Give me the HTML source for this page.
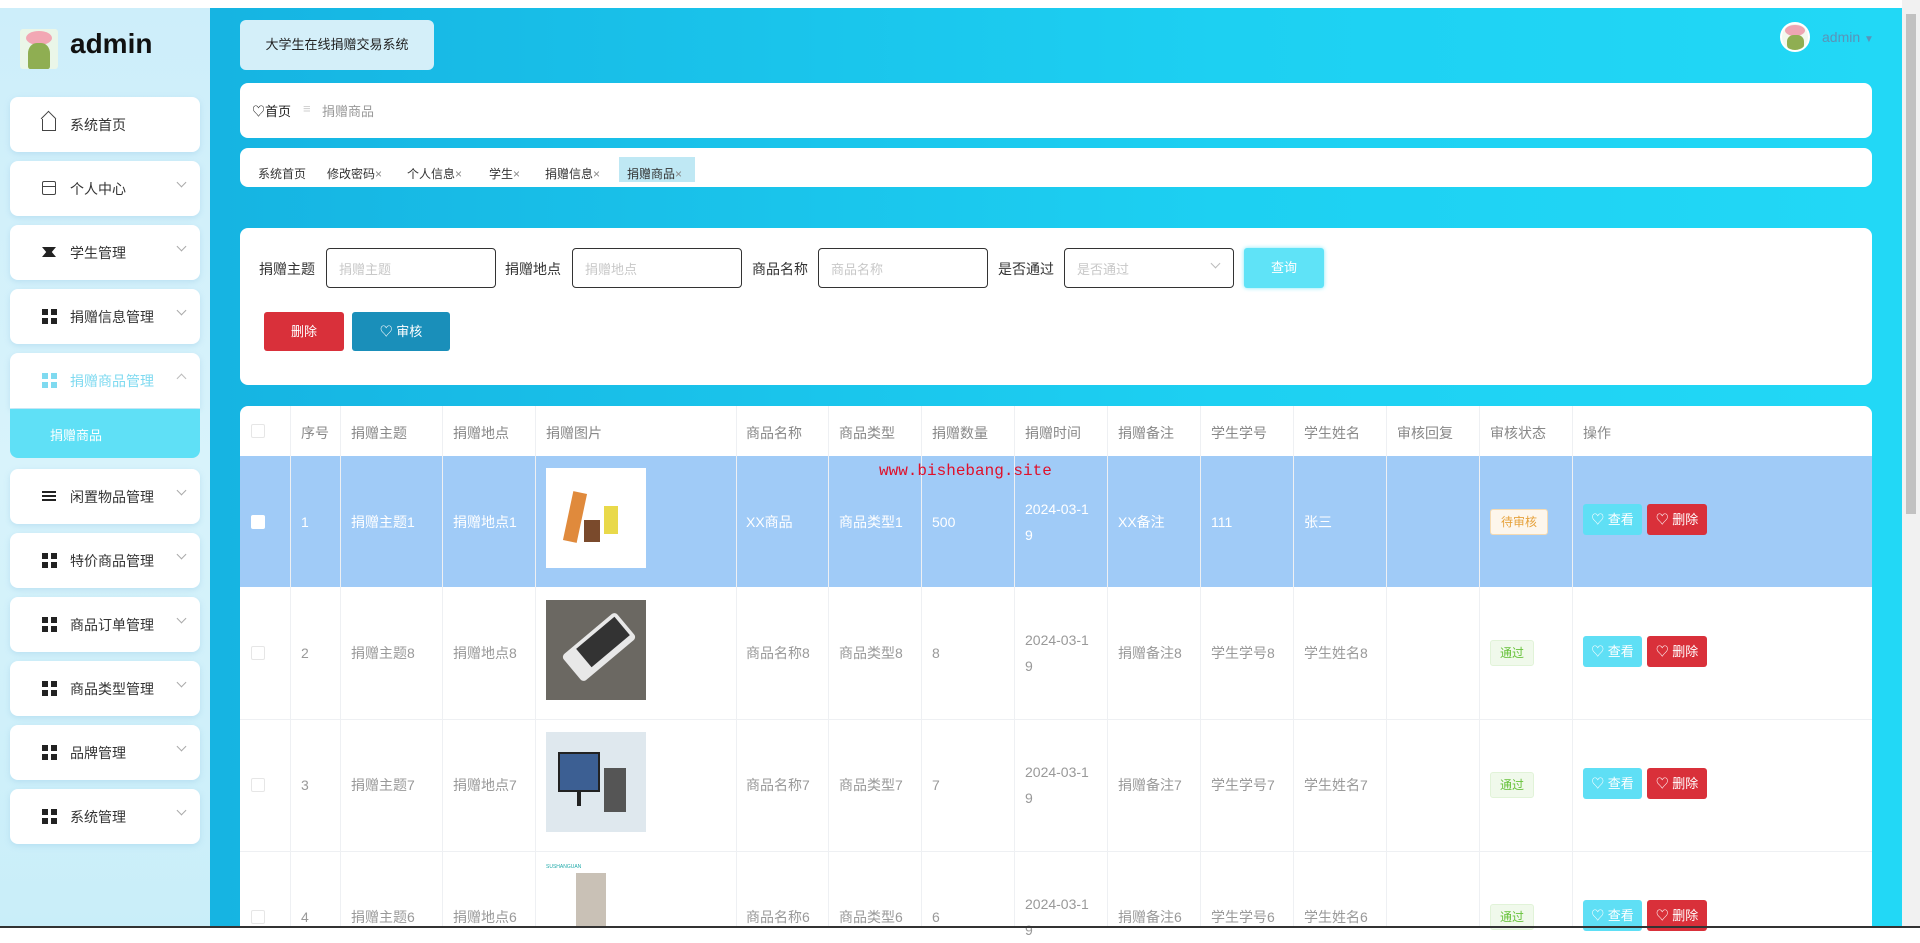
<!DOCTYPE html>
<html><head><meta charset="utf-8">
<style>
*{margin:0;padding:0;box-sizing:border-box}
body{width:1920px;height:928px;overflow:hidden;position:relative;font-family:"Liberation Sans","Noto Sans CJK SC",sans-serif;font-size:14px;color:#333;background:#fff}
.a{position:absolute}
#side{left:0;top:8px;width:210px;height:920px;background:linear-gradient(180deg,#cdeefa,#d8f3fb 50%,#c9eef9)}
#main{left:210px;top:8px;width:1692px;height:920px;background:linear-gradient(90deg,#16b4e2,#1dd0f2 60%,#22d8f6)}
#sb{left:1902px;top:0;width:18px;height:928px;background:#f1f1f1}
.mi{left:10px;width:190px;height:55px;background:#fff;border-radius:8px;box-shadow:0 2px 6px rgba(150,200,230,.4)}
.mi span{position:absolute;left:60px;top:18px;font-size:14px;color:#333}
.mi i{position:absolute;left:32px;top:20px;width:14px;height:14px}
.mi b{position:absolute;left:168px;top:18px;width:7px;height:7px;border-right:1px solid #aaa;border-bottom:1px solid #aaa;transform:rotate(45deg)}
.card{background:#fff;border-radius:8px}
.lbl{font-size:14px;color:#333}
.inp{height:40px;border:1px solid #333;border-radius:4px;background:#fff;font-size:13px;color:#c8c8c8;padding:10px 12px}
.th{top:423px;font-size:14px;color:#888}
.vl{width:1px;background:#eef0f3}
.tc{font-size:14px;color:#999;line-height:26px}
.w{color:#fff}
.btn{height:31px;border-radius:3px;color:#fff;font-size:13px;line-height:31px;text-align:center}
.grid4{display:grid;grid-template-columns:6px 6px;gap:3px}
.grid4 u{display:block;width:6px;height:6px;background:#222}
</style></head><body>
<div class="a" id="side"></div>
<div class="a" id="main"></div>
<div class="a" id="sb"><div class="a" style="left:4px;top:14px;width:10px;height:500px;background:#c1c1c1"></div></div>

<!-- logo -->
<div class="a" style="left:20px;top:29px;width:38px;height:40px;background:#eaf6e8;border-radius:3px;overflow:hidden">
<div class="a" style="left:6px;top:2px;width:26px;height:14px;background:#f2a7b4;border-radius:50%"></div>
<div class="a" style="left:8px;top:14px;width:22px;height:26px;background:#8fae52;border-radius:40% 40% 10% 10%"></div>
</div>
<div class="a" style="left:70px;top:28px;font-size:28px;font-weight:bold;color:#111">admin</div>

<!-- menu -->
<div class="a mi" style="top:97px"><i style="border:1.5px solid #444;border-top:none;top:22px;height:12px"></i><i style="border-left:1.5px solid #444;border-top:1.5px solid #444;transform:rotate(45deg);width:11px;height:11px;left:33px;top:16px"></i><span>系统首页</span></div>
<div class="a mi" style="top:161px"><i style="border:1.5px solid #444;border-radius:2px"></i><i style="border-top:1.5px solid #444;top:25px;height:1px"></i><span>个人中心</span><b></b></div>
<div class="a mi" style="top:225px"><i style="background:#222;height:10px;top:22px;clip-path:polygon(0 0,100% 0,70% 50%,100% 100%,0 100%,30% 50%)"></i><span>学生管理</span><b></b></div>
<div class="a mi" style="top:289px"><i class="grid4" style="display:grid"><u></u><u></u><u></u><u></u></i><span>捐赠信息管理</span><b></b></div>
<div class="a mi" style="top:353px;border-radius:8px 8px 0 0"><i class="grid4" style="display:grid"><u style="background:#7fdaf0"></u><u style="background:#7fdaf0"></u><u style="background:#7fdaf0"></u><u style="background:#7fdaf0"></u></i><span style="color:#7fdaf0">捐赠商品管理</span><b style="transform:rotate(-135deg);top:22px;border-color:#bbb"></b></div>
<div class="a" style="left:10px;top:409px;width:190px;height:49px;background:#5fe0f6;border-radius:0 0 8px 8px"><span class="a" style="left:40px;top:16px;font-size:13px;color:#fff">捐赠商品</span></div>
<div class="a mi" style="top:469px"><i style="border-top:2px solid #222;border-bottom:2px solid #222;height:10px;top:22px"></i><i style="border-top:2px solid #222;height:1px;top:26px"></i><span>闲置物品管理</span><b></b></div>
<div class="a mi" style="top:533px"><i class="grid4" style="display:grid"><u></u><u></u><u></u><u></u></i><span>特价商品管理</span><b></b></div>
<div class="a mi" style="top:597px"><i class="grid4" style="display:grid"><u></u><u></u><u></u><u></u></i><span>商品订单管理</span><b></b></div>
<div class="a mi" style="top:661px"><i class="grid4" style="display:grid"><u></u><u></u><u></u><u></u></i><span>商品类型管理</span><b></b></div>
<div class="a mi" style="top:725px"><i class="grid4" style="display:grid"><u></u><u></u><u></u><u></u></i><span>品牌管理</span><b></b></div>
<div class="a mi" style="top:789px"><i class="grid4" style="display:grid"><u></u><u></u><u></u><u></u></i><span>系统管理</span><b></b></div>

<!-- header -->
<div class="a" style="left:240px;top:20px;width:194px;height:50px;background:#d4eff9;border-radius:6px;font-size:13px;line-height:50px;text-align:center;color:#222">大学生在线捐赠交易系统</div>
<div class="a" style="left:1780px;top:22px;width:30px;height:30px;border-radius:50%;background:#f3f8ee;overflow:hidden;border:2px solid #fff"><div class="a" style="left:3px;top:1px;width:20px;height:11px;background:#eea5b3;border-radius:50%"></div><div class="a" style="left:5px;top:11px;width:17px;height:16px;background:#8fae52;border-radius:40%"></div></div>
<div class="a" style="left:1822px;top:29px;font-size:14px;color:#5a93b8">admin <span style="font-size:10px">▼</span></div>

<div class="a card" style="left:240px;top:83px;width:1632px;height:55px"><span class="a" style="left:12px;top:18px;font-size:13px;color:#222">♡首页</span><span class="a" style="left:63px;top:18px;font-size:13px;color:#ccc">≡</span><span class="a" style="left:82px;top:18px;font-size:13px;color:#999">捐赠商品</span></div>

<div class="a card" style="left:240px;top:148px;width:1632px;height:39px;font-size:12px;color:#333">
<span class="a" style="left:18px;top:17px">系统首页</span>
<span class="a" style="left:87px;top:17px">修改密码<span style="color:#888">×</span></span>
<span class="a" style="left:167px;top:17px">个人信息<span style="color:#888">×</span></span>
<span class="a" style="left:249px;top:17px">学生<span style="color:#888">×</span></span>
<span class="a" style="left:305px;top:17px">捐赠信息<span style="color:#888">×</span></span>
<div class="a" style="left:379px;top:9px;width:76px;height:25px;background:#bfe8f4"></div>
<span class="a" style="left:387px;top:17px">捐赠商品<span style="color:#888">×</span></span>
</div>

<!-- search -->
<div class="a card" style="left:240px;top:228px;width:1632px;height:157px"></div>
<span class="a lbl" style="left:259px;top:259px">捐赠主题</span><div class="a inp" style="left:326px;top:248px;width:170px">捐赠主题</div>
<span class="a lbl" style="left:505px;top:259px">捐赠地点</span><div class="a inp" style="left:572px;top:248px;width:170px">捐赠地点</div>
<span class="a lbl" style="left:752px;top:259px">商品名称</span><div class="a inp" style="left:818px;top:248px;width:170px">商品名称</div>
<span class="a lbl" style="left:998px;top:259px">是否通过</span><div class="a inp" style="left:1064px;top:248px;width:170px">是否通过<span class="a" style="right:14px;top:11px;width:7px;height:7px;border-right:1px solid #bbb;border-bottom:1px solid #bbb;transform:rotate(45deg)"></span></div>
<div class="a btn" style="left:1244px;top:248px;width:80px;height:40px;line-height:40px;background:#5fe3f7;box-shadow:0 0 4px #7fe9f9">查询</div>
<div class="a btn" style="left:264px;top:312px;width:80px;height:39px;line-height:39px;background:#d9303a">删除</div>
<div class="a btn" style="left:352px;top:312px;width:98px;height:39px;line-height:39px;background:#1a8fba">♡ 审核</div>

<!-- table -->
<div class="a" style="left:240px;top:406px;width:1632px;height:522px;background:#fff;border-radius:8px 8px 0 0"></div>
<div class="a" style="left:240px;top:456px;width:1632px;height:131px;background:#a0cbf7"></div>
<div class="a" style="left:240px;top:719px;width:1632px;height:1px;background:#eef0f3"></div>
<div class="a" style="left:240px;top:851px;width:1632px;height:1px;background:#eef0f3"></div>
<div class="a vl" style="left:290px;top:406px;height:522px"></div>
<div class="a vl" style="left:340px;top:406px;height:522px"></div>
<div class="a vl" style="left:442px;top:406px;height:522px"></div>
<div class="a vl" style="left:535px;top:406px;height:522px"></div>
<div class="a vl" style="left:736px;top:406px;height:522px"></div>
<div class="a vl" style="left:828px;top:406px;height:522px"></div>
<div class="a vl" style="left:921px;top:406px;height:522px"></div>
<div class="a vl" style="left:1014px;top:406px;height:522px"></div>
<div class="a vl" style="left:1107px;top:406px;height:522px"></div>
<div class="a vl" style="left:1200px;top:406px;height:522px"></div>
<div class="a vl" style="left:1293px;top:406px;height:522px"></div>
<div class="a vl" style="left:1386px;top:406px;height:522px"></div>
<div class="a vl" style="left:1479px;top:406px;height:522px"></div>
<div class="a vl" style="left:1572px;top:406px;height:522px"></div>

<div class="a" style="left:251px;top:424px;width:14px;height:14px;border:1px solid #e6e6e6;border-radius:2px"></div>
<span class="a th" style="left:301px">序号</span><span class="a th" style="left:351px">捐赠主题</span><span class="a th" style="left:453px">捐赠地点</span><span class="a th" style="left:546px">捐赠图片</span><span class="a th" style="left:746px">商品名称</span><span class="a th" style="left:839px">商品类型</span><span class="a th" style="left:932px">捐赠数量</span><span class="a th" style="left:1025px">捐赠时间</span><span class="a th" style="left:1118px">捐赠备注</span><span class="a th" style="left:1211px">学生学号</span><span class="a th" style="left:1304px">学生姓名</span><span class="a th" style="left:1397px">审核回复</span><span class="a th" style="left:1490px">审核状态</span><span class="a th" style="left:1583px">操作</span>

<div class="a" style="left:879px;top:462px;font-family:'Liberation Mono',monospace;font-size:16px;color:#e0102a">www.bishebang.site</div>

<!-- row1 -->
<div class="a" style="left:251px;top:515px;width:14px;height:14px;background:#fff;border-radius:2px"></div>
<div class="a tc w" style="left:301px;top:509px">1</div><div class="a tc w" style="left:351px;top:509px">捐赠主题1</div><div class="a tc w" style="left:453px;top:509px">捐赠地点1</div>
<div class="a" style="left:546px;top:468px;width:100px;height:100px;background:#fff"><div class="a" style="left:22px;top:24px;width:14px;height:50px;background:#e08a3c;transform:rotate(12deg)"></div><div class="a" style="left:38px;top:52px;width:16px;height:22px;background:#7a4a2c"></div><div class="a" style="left:58px;top:38px;width:14px;height:28px;background:#e9d94a"></div></div>
<div class="a tc w" style="left:746px;top:509px">XX商品</div><div class="a tc w" style="left:839px;top:509px">商品类型1</div><div class="a tc w" style="left:932px;top:509px">500</div>
<div class="a tc w" style="left:1025px;top:496px">2024-03-1<br>9</div><div class="a tc w" style="left:1118px;top:509px">XX备注</div><div class="a tc w" style="left:1211px;top:509px">111</div><div class="a tc w" style="left:1304px;top:509px">张三</div>
<div class="a" style="left:1490px;top:509px;width:58px;height:26px;background:#fdf6ec;border:1px solid #f5dab1;border-radius:3px;font-size:12px;color:#e6a23c;text-align:center;line-height:24px">待审核</div>
<div class="a btn" style="left:1583px;top:504px;width:59px;background:#5fdff5">♡ 查看</div><div class="a btn" style="left:1647px;top:504px;width:60px;background:#d9303a">♡ 删除</div>

<!-- row2 -->
<div class="a" style="left:251px;top:646px;width:14px;height:14px;border:1px solid #e6e6e6;border-radius:2px"></div>
<div class="a tc" style="left:301px;top:640px">2</div><div class="a tc" style="left:351px;top:640px">捐赠主题8</div><div class="a tc" style="left:453px;top:640px">捐赠地点8</div>
<div class="a" style="left:546px;top:600px;width:100px;height:100px;background:#6b6862"><div class="a" style="left:18px;top:30px;width:70px;height:34px;background:#e8e8e8;transform:rotate(-40deg);border-radius:4px"></div><div class="a" style="left:32px;top:30px;width:50px;height:24px;background:#333;transform:rotate(-40deg)"></div></div>
<div class="a tc" style="left:746px;top:640px">商品名称8</div><div class="a tc" style="left:839px;top:640px">商品类型8</div><div class="a tc" style="left:932px;top:640px">8</div>
<div class="a tc" style="left:1025px;top:627px">2024-03-1<br>9</div><div class="a tc" style="left:1118px;top:640px">捐赠备注8</div><div class="a tc" style="left:1211px;top:640px">学生学号8</div><div class="a tc" style="left:1304px;top:640px">学生姓名8</div>
<div class="a" style="left:1490px;top:640px;width:44px;height:26px;background:#f0f9eb;border:1px solid #e1f3d8;border-radius:3px;font-size:12px;color:#67c23a;text-align:center;line-height:24px">通过</div>
<div class="a btn" style="left:1583px;top:636px;width:59px;background:#5fdff5">♡ 查看</div><div class="a btn" style="left:1647px;top:636px;width:60px;background:#d9303a">♡ 删除</div>

<!-- row3 -->
<div class="a" style="left:251px;top:778px;width:14px;height:14px;border:1px solid #e6e6e6;border-radius:2px"></div>
<div class="a tc" style="left:301px;top:772px">3</div><div class="a tc" style="left:351px;top:772px">捐赠主题7</div><div class="a tc" style="left:453px;top:772px">捐赠地点7</div>
<div class="a" style="left:546px;top:732px;width:100px;height:100px;background:#dfe8ee"><div class="a" style="left:12px;top:20px;width:42px;height:40px;background:#3c5f93;border:2px solid #222"></div><div class="a" style="left:31px;top:60px;width:4px;height:14px;background:#222"></div><div class="a" style="left:58px;top:36px;width:22px;height:44px;background:#555"></div></div>
<div class="a tc" style="left:746px;top:772px">商品名称7</div><div class="a tc" style="left:839px;top:772px">商品类型7</div><div class="a tc" style="left:932px;top:772px">7</div>
<div class="a tc" style="left:1025px;top:759px">2024-03-1<br>9</div><div class="a tc" style="left:1118px;top:772px">捐赠备注7</div><div class="a tc" style="left:1211px;top:772px">学生学号7</div><div class="a tc" style="left:1304px;top:772px">学生姓名7</div>
<div class="a" style="left:1490px;top:772px;width:44px;height:26px;background:#f0f9eb;border:1px solid #e1f3d8;border-radius:3px;font-size:12px;color:#67c23a;text-align:center;line-height:24px">通过</div>
<div class="a btn" style="left:1583px;top:768px;width:59px;background:#5fdff5">♡ 查看</div><div class="a btn" style="left:1647px;top:768px;width:60px;background:#d9303a">♡ 删除</div>

<!-- row4 -->
<div class="a" style="left:251px;top:910px;width:14px;height:14px;border:1px solid #e6e6e6;border-radius:2px"></div>
<div class="a tc" style="left:301px;top:904px">4</div><div class="a tc" style="left:351px;top:904px">捐赠主题6</div><div class="a tc" style="left:453px;top:904px">捐赠地点6</div>
<div class="a" style="left:576px;top:873px;width:30px;height:55px;background:#c9c1b6"></div>
<div class="a" style="left:546px;top:864px;font-size:5px;color:#2aa">SUSHANGUAN</div>
<div class="a tc" style="left:746px;top:904px">商品名称6</div><div class="a tc" style="left:839px;top:904px">商品类型6</div><div class="a tc" style="left:932px;top:904px">6</div>
<div class="a tc" style="left:1025px;top:891px">2024-03-1<br>9</div><div class="a tc" style="left:1118px;top:904px">捐赠备注6</div><div class="a tc" style="left:1211px;top:904px">学生学号6</div><div class="a tc" style="left:1304px;top:904px">学生姓名6</div>
<div class="a" style="left:1490px;top:904px;width:44px;height:26px;background:#f0f9eb;border:1px solid #e1f3d8;border-radius:3px;font-size:12px;color:#67c23a;text-align:center;line-height:24px">通过</div>
<div class="a btn" style="left:1583px;top:900px;width:59px;background:#5fdff5">♡ 查看</div><div class="a btn" style="left:1647px;top:900px;width:60px;background:#d9303a">♡ 删除</div>
<div class="a" style="left:0;top:926px;width:1920px;height:2px;background:#333"></div>
</body></html>
